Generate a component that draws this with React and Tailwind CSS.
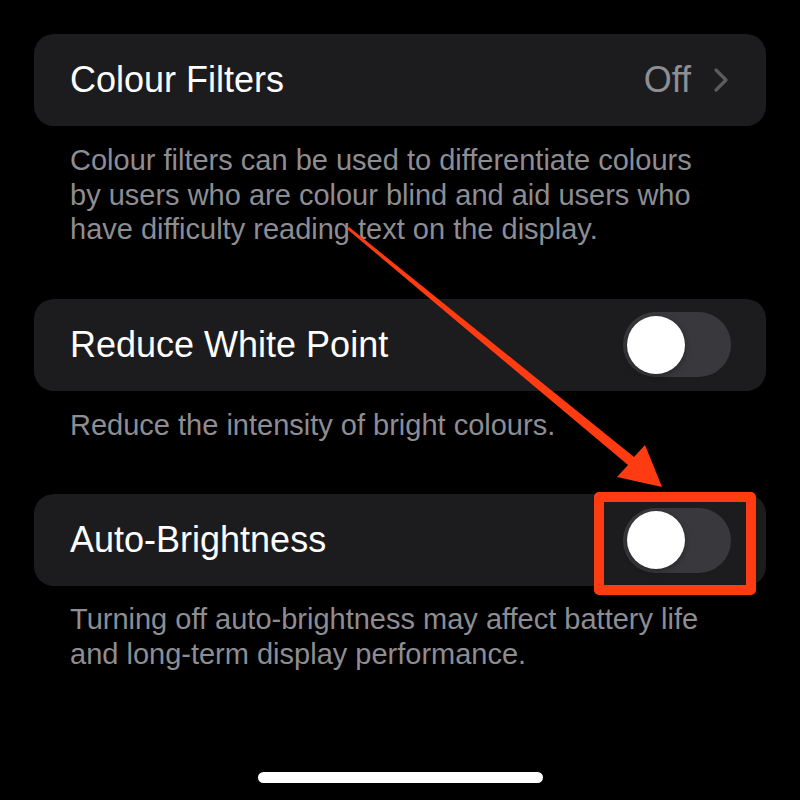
import React from "react";

const font = { fontFamily: '"Liberation Sans", Arial, sans-serif' };

function Toggle() {
  return (
    <div className="flex h-[65px] w-[108px] items-center rounded-full bg-[#39393d] px-[4px]">
      <div className="h-[58px] w-[58px] rounded-full bg-white shadow-[0_2px_6px_rgba(0,0,0,0.35)]" />
    </div>
  );
}

function Card({ children }) {
  return (
    <div className="mx-[34px] flex h-[92px] items-center justify-between rounded-[20px] bg-[#1c1c1e] pl-[36px] pr-[35px]">
      {children}
    </div>
  );
}

function Footer({ children, className = "" }) {
  return (
    <p className={`mx-[34px] pl-[36px] pr-[44px] text-[29px] leading-[34.5px] text-[#8d8d93] ${className}`}>
      {children}
    </p>
  );
}

export default function App() {
  return (
    <div className="relative h-[800px] w-[800px] overflow-hidden bg-black" style={font}>
      <div className="flex flex-col pt-[34px]">
        <Card>
          <span className="text-[36px] text-white">Colour Filters</span>
          <div className="flex items-center gap-[22px] pr-[2px]">
            <span className="text-[36px] text-[#8e8e93]">Off</span>
            <svg width="16" height="26" viewBox="0 0 16 26" fill="none">
              <path d="M3 3l10 10-10 10" stroke="#5b5b60" strokeWidth="3.2" strokeLinecap="round" strokeLinejoin="round" />
            </svg>
          </div>
        </Card>
        <Footer className="mt-[17px]">
          Colour filters can be used to differentiate colours by users who are colour blind and aid users who
          have difficulty reading text on the display.
        </Footer>

        <div className="mt-[52px]">
          <Card>
            <span className="text-[36px] text-white">Reduce White Point</span>
            <Toggle />
          </Card>
        </div>
        <Footer className="mt-[17px]">Reduce the intensity of bright colours.</Footer>

        <div className="mt-[52px]">
          <Card>
            <span className="text-[36px] text-white">Auto-Brightness</span>
            <Toggle />
          </Card>
        </div>
        <Footer className="mt-[16px]">
          Turning off auto-brightness may affect battery life and long-term display performance.
        </Footer>
      </div>

      {/* home indicator */}
      <div className="absolute bottom-[17px] left-[258px] h-[11px] w-[285px] rounded-full bg-white" />

      {/* annotation: highlight box + arrow */}
      <div className="absolute left-[594px] top-[492px] h-[103px] w-[162px] rounded-[5px] border-[10px] border-[#ff3b12]" />
      <svg className="absolute left-0 top-0" width="800" height="800" viewBox="0 0 800 800">
        <polygon
          points="349,227 634,457 645,445 662,487 617,477 628,465 347,229"
          fill="#ff3b12"
          strokeLinejoin="round"
        />
      </svg>
    </div>
  );
}
